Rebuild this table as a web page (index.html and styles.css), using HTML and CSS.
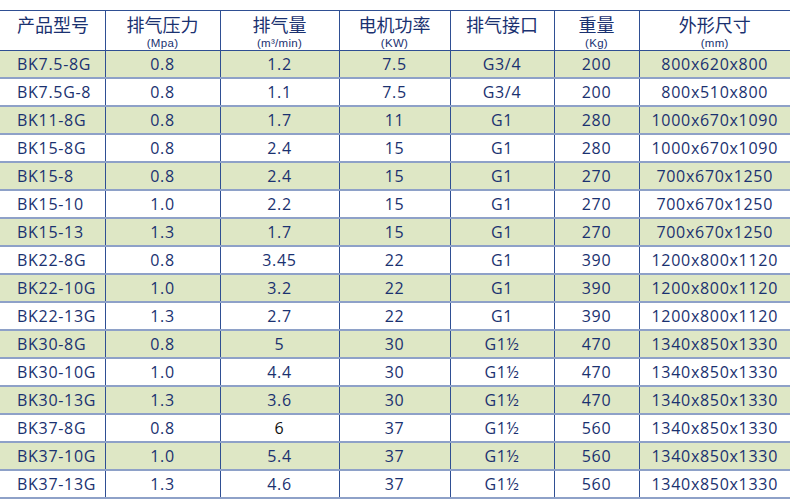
FILE: index.html
```html
<!DOCTYPE html>
<html lang="zh">
<head>
<meta charset="utf-8">
<link rel="stylesheet" href="styles.css">
</head>
<body>
<table class="spec">
  <colgroup>
    <col class="c1"><col class="c2"><col class="c3"><col class="c4"><col class="c5"><col class="c6"><col class="c7">
  </colgroup>
  <thead>
    <tr>
      <th class="first"><span class="zh">产品型号</span></th>
      <th><span class="zh">排气压力</span><span class="unit">(Mpa)</span></th>
      <th><span class="zh">排气量</span><span class="unit">(m³/min)</span></th>
      <th><span class="zh">电机功率</span><span class="unit">(KW)</span></th>
      <th><span class="zh">排气接口</span></th>
      <th><span class="zh">重量</span><span class="unit">(Kg)</span></th>
      <th><span class="zh">外形尺寸</span><span class="unit">(mm)</span></th>
    </tr>
  </thead>
  <tbody>
    <tr class="g"><td class="first">BK7.5-8G</td><td>0.8</td><td>1.2</td><td>7.5</td><td>G3/4</td><td>200</td><td>800x620x800</td></tr>
    <tr><td class="first">BK7.5G-8</td><td>0.8</td><td>1.1</td><td>7.5</td><td>G3/4</td><td>200</td><td>800x510x800</td></tr>
    <tr class="g"><td class="first">BK11-8G</td><td>0.8</td><td>1.7</td><td>11</td><td>G1</td><td>280</td><td>1000x670x1090</td></tr>
    <tr><td class="first">BK15-8G</td><td>0.8</td><td>2.4</td><td>15</td><td>G1</td><td>280</td><td>1000x670x1090</td></tr>
    <tr class="g"><td class="first">BK15-8</td><td>0.8</td><td>2.4</td><td>15</td><td>G1</td><td>270</td><td>700x670x1250</td></tr>
    <tr><td class="first">BK15-10</td><td>1.0</td><td>2.2</td><td>15</td><td>G1</td><td>270</td><td>700x670x1250</td></tr>
    <tr class="g"><td class="first">BK15-13</td><td>1.3</td><td>1.7</td><td>15</td><td>G1</td><td>270</td><td>700x670x1250</td></tr>
    <tr><td class="first">BK22-8G</td><td>0.8</td><td>3.45</td><td>22</td><td>G1</td><td>390</td><td>1200x800x1120</td></tr>
    <tr class="g"><td class="first">BK22-10G</td><td>1.0</td><td>3.2</td><td>22</td><td>G1</td><td>390</td><td>1200x800x1120</td></tr>
    <tr><td class="first">BK22-13G</td><td>1.3</td><td>2.7</td><td>22</td><td>G1</td><td>390</td><td>1200x800x1120</td></tr>
    <tr class="g"><td class="first">BK30-8G</td><td>0.8</td><td>5</td><td>30</td><td>G1½</td><td>470</td><td>1340x850x1330</td></tr>
    <tr><td class="first">BK30-10G</td><td>1.0</td><td>4.4</td><td>30</td><td>G1½</td><td>470</td><td>1340x850x1330</td></tr>
    <tr class="g"><td class="first">BK30-13G</td><td>1.3</td><td>3.6</td><td>30</td><td>G1½</td><td>470</td><td>1340x850x1330</td></tr>
    <tr><td class="first">BK37-8G</td><td>0.8</td><td class="black">6</td><td>37</td><td>G1½</td><td>560</td><td>1340x850x1330</td></tr>
    <tr class="g"><td class="first">BK37-10G</td><td>1.0</td><td>5.4</td><td>37</td><td>G1½</td><td>560</td><td>1340x850x1330</td></tr>
    <tr><td class="first">BK37-13G</td><td>1.3</td><td>4.6</td><td>37</td><td>G1½</td><td>560</td><td>1340x850x1330</td></tr>
  </tbody>
</table>
</body>
</html>
```
FILE: styles.css
```css
html, body {
  margin: 0;
  padding: 0;
  background: #ffffff;
}
body {
  padding-top: 10px;
  font-family: "Open Sans", "Noto Sans", "Noto Sans CJK SC", sans-serif;
  color: #1a3170;
}
.spec {
  width: 790px;
  border-collapse: collapse;
  table-layout: fixed;
}
.c1 { width: 105px; }
.c2 { width: 115px; }
.c3 { width: 119px; }
.c4 { width: 111px; }
.c5 { width: 104px; }
.c6 { width: 85px; }
.c7 { width: 151px; }

.spec th {
  height: 39px;
  padding: 0;
  border-top: 1px solid #2f4f93;
  border-bottom: 1px solid #2f4f93;
  border-left: 1px solid #2f4f93;
  font-weight: normal;
  text-align: center;
  vertical-align: top;
}
.spec th.first,
.spec td.first {
  border-left: none;
  text-align: left;
  padding-left: 17px;
}
.zh {
  display: block;
  font-family: "Noto Sans CJK SC", sans-serif;
  font-size: 18px;
  font-weight: 400;
  line-height: 26px;
}
.unit {
  display: block;
  font-family: "Liberation Sans", sans-serif;
  font-size: 11.5px;
  line-height: 13px;
  letter-spacing: 0.3px;
}
.spec td {
  height: 26px;
  padding: 0;
  border-bottom: 2px solid #8ea1c8;
  border-left: 1px solid #2f4f93;
  font-size: 16px;
  font-weight: 500;
  text-align: center;
  vertical-align: middle;
  letter-spacing: 0.7px;
}
.spec tr.g td {
  background: #dee7c5;
}
.spec td.black {
  color: #111111;
}
```
